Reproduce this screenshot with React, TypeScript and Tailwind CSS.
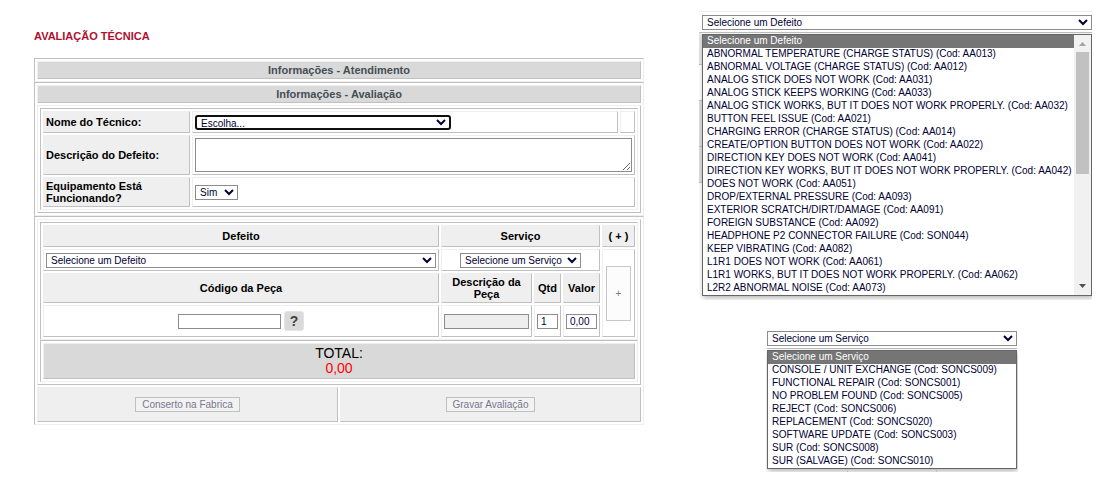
import type { ReactNode } from "react";

const defects = [
  "ABNORMAL TEMPERATURE (CHARGE STATUS) (Cod: AA013)",
  "ABNORMAL VOLTAGE (CHARGE STATUS) (Cod: AA012)",
  "ANALOG STICK DOES NOT WORK (Cod: AA031)",
  "ANALOG STICK KEEPS WORKING (Cod: AA033)",
  "ANALOG STICK WORKS, BUT IT DOES NOT WORK PROPERLY. (Cod: AA032)",
  "BUTTON FEEL ISSUE (Cod: AA021)",
  "CHARGING ERROR (CHARGE STATUS) (Cod: AA014)",
  "CREATE/OPTION BUTTON DOES NOT WORK (Cod: AA022)",
  "DIRECTION KEY DOES NOT WORK (Cod: AA041)",
  "DIRECTION KEY WORKS, BUT IT DOES NOT WORK PROPERLY. (Cod: AA042)",
  "DOES NOT WORK (Cod: AA051)",
  "DROP/EXTERNAL PRESSURE (Cod: AA093)",
  "EXTERIOR SCRATCH/DIRT/DAMAGE (Cod: AA091)",
  "FOREIGN SUBSTANCE (Cod: AA092)",
  "HEADPHONE P2 CONNECTOR FAILURE (Cod: SON044)",
  "KEEP VIBRATING (Cod: AA082)",
  "L1R1 DOES NOT WORK (Cod: AA061)",
  "L1R1 WORKS, BUT IT DOES NOT WORK PROPERLY. (Cod: AA062)",
  "L2R2 ABNORMAL NOISE (Cod: AA073)",
];

const services = [
  "CONSOLE / UNIT EXCHANGE (Cod: SONCS009)",
  "FUNCTIONAL REPAIR (Cod: SONCS001)",
  "NO PROBLEM FOUND (Cod: SONCS005)",
  "REJECT (Cod: SONCS006)",
  "REPLACEMENT (Cod: SONCS020)",
  "SOFTWARE UPDATE (Cod: SONCS003)",
  "SUR (Cod: SONCS008)",
  "SUR (SALVAGE) (Cod: SONCS010)",
];

const panel =
  "border border-t-[#c0c0c0] border-l-[#c0c0c0] border-r-[#eeeeee] border-b-[#eeeeee] p-[2px]";
const cell =
  "border border-t-[#eeeeee] border-l-[#eeeeee] border-r-[#c0c0c0] border-b-[#c0c0c0]";
const heading = `${cell} flex h-[18px] items-center justify-center bg-[#d9d9d9] text-[11px] leading-[12px] font-bold text-[#444f55]`;
const label = `${cell} flex items-center bg-[#efefef] px-[2px] text-[11px] leading-[12px] font-bold`;
const th = `${cell} bg-[#efefef] p-0 text-center align-middle text-[11px] leading-[12px] font-bold`;
const td = `${cell} p-0 text-center align-middle`;
const field =
  "h-[15px] border border-[#8c8c8c] bg-white text-[10px] leading-[13px] text-[#000033] outline-none";
const action =
  "h-[15px] border border-[#c0c0c0] bg-[#f2f2f2] text-[10px] leading-[13px] text-[#77778f]";

function Picker({
  name,
  first,
  items = [],
  className,
}: {
  name: string;
  first: string;
  items?: string[];
  className: string;
}) {
  return (
    <select aria-label={name} className={`${field} block rounded-none p-0 ${className}`}>
      <option>{first}</option>
      {items.map((item) => (
        <option key={item}>{item}</option>
      ))}
    </select>
  );
}

function OptionList({ name, first, items, children }: { name: string; first: string; items: string[]; children?: ReactNode }) {
  return (
    <div className="flex border border-[#666666] bg-white shadow-[1px_2px_5px_rgba(0,0,0,0.3)]">
      <ul role="listbox" aria-label={name} className="min-w-0 flex-1 text-[10px] leading-[12px] whitespace-nowrap text-[#000033]">
        <li role="option" aria-selected="true" className="bg-[#757575] px-1 pb-px text-white">
          {first}
        </li>
        {items.map((item) => (
          <li key={item} role="option" aria-selected="false" className="px-1 pb-px">
            {item}
          </li>
        ))}
      </ul>
      {children}
    </div>
  );
}

export default function App() {
  return (
    <div className="flex items-start gap-[55px] bg-white pr-[25px] pl-[34px] font-['Liberation_Sans',Arial,sans-serif] text-black">
      <main className="min-w-0 flex-[610] pt-[30px]">
        <h1 className="mb-4 text-[11px] leading-[12px] font-bold text-[#b01030]">AVALIAÇÃO TÉCNICA</h1>

        <section className={panel}>
          <h2 className={heading}>Informações - Atendimento</h2>
        </section>

        <section className={`${panel} flex flex-col gap-[2px]`}>
          <h2 className={heading}>Informações - Avaliação</h2>
          <div className={`${cell} p-[2px]`}>
            <div className={`${panel} flex flex-col gap-[2px]`}>
              <div className="flex h-[22px] gap-[2px]">
                <label htmlFor="tecnico" className={`${label} w-[147px]`}>
                  Nome do Técnico:
                </label>
                <div className={`${cell} flex flex-1 items-center px-[2px]`}>
                  <select
                    id="tecnico"
                    className="h-[15px] w-[256px] rounded-[3px] border-2 border-[#101010] bg-white p-0 text-[10px] leading-[11px] text-[#000033] outline-none"
                  >
                    <option>Escolha...</option>
                  </select>
                </div>
                <div className={`${cell} w-[15px]`} />
              </div>
              <div className="flex h-[40px] gap-[2px]">
                <label htmlFor="descricao" className={`${label} w-[147px]`}>
                  Descrição do Defeito:
                </label>
                <div className={`${cell} flex flex-1 p-[2px]`}>
                  <textarea id="descricao" className="h-[34px] w-full border border-[#8c8c8c] text-[10px] outline-none" />
                </div>
              </div>
              <div className="flex h-[30px] gap-[2px]">
                <label htmlFor="funcionando" className={`${label} w-[147px]`}>
                  Equipamento Está Funcionando?
                </label>
                <div className={`${cell} flex flex-1 items-center px-[2px]`}>
                  <select id="funcionando" className={`${field} w-[43px] rounded-none p-0`}>
                    <option>Sim</option>
                    <option>Não</option>
                  </select>
                </div>
              </div>
            </div>
          </div>
        </section>

        <section className={`${panel} flex flex-col gap-[2px]`}>
          <div className={`${cell} p-[2px]`}>
            <div className="border border-t-[#c0c0c0] border-r-[#eeeeee] border-b-[#eeeeee] border-l-[#c0c0c0]">
              <table className="w-full table-fixed border-separate border-spacing-[2px]">
                <colgroup>
                  <col />
                  <col className="w-[91px]" />
                  <col className="w-[27px]" />
                  <col className="w-[37px]" />
                  <col className="w-[33px]" />
                </colgroup>
                <tbody>
                  <tr className="h-[22px]">
                    <th className={th}>Defeito</th>
                    <th className={th} colSpan={3}>
                      Serviço
                    </th>
                    <th className={th}>( + )</th>
                  </tr>
                  <tr className="h-[22px]">
                    <td className={`${td} px-[2px]`}>
                      <Picker name="Defeito" first="Selecione um Defeito" items={defects} className="w-full" />
                    </td>
                    <td className={td} colSpan={3}>
                      <Picker name="Serviço" first="Selecione um Serviço" items={services} className="mx-auto w-[121px]" />
                    </td>
                    <td className={td} rowSpan={3}>
                      <button type="button" disabled className="h-[55px] w-[25px] border border-[#c8c8c8] bg-[#fcfcfc] text-[10px] text-[#77778f]">
                        +
                      </button>
                    </td>
                  </tr>
                  <tr className="h-[30px]">
                    <th className={th}>Código da Peça</th>
                    <th className={th}>Descrição da Peça</th>
                    <th className={th}>Qtd</th>
                    <th className={th}>Valor</th>
                  </tr>
                  <tr className="h-[32px]">
                    <td className={td}>
                      <div className="flex items-center justify-center gap-[3px]">
                        <input aria-label="Código da Peça" className={`${field} w-[103px] px-[3px]`} />
                        <button
                          type="button"
                          aria-label="Pesquisar peça"
                          className="flex h-[20px] w-[20px] items-center justify-center rounded-[3px] border border-[#e4e4e4] bg-[#dadada]"
                        >
                          <span className="text-[14px] leading-[16px] font-black text-[#404040]">?</span>
                        </button>
                      </div>
                    </td>
                    <td className={td}>
                      <input aria-label="Descrição da Peça" readOnly className="mx-auto block h-[15px] w-[85px] border border-[#8c8c8c] bg-[#eeeeee] text-[10px] outline-none" />
                    </td>
                    <td className={td}>
                      <input aria-label="Qtd" defaultValue="1" className={`${field} mx-auto block w-[21px] px-[3px]`} />
                    </td>
                    <td className={td}>
                      <input aria-label="Valor" defaultValue="0,00" className={`${field} mx-auto block w-[31px] px-[3px]`} />
                    </td>
                  </tr>
                </tbody>
              </table>
            </div>
            <div className={panel}>
              <div className={`${cell} flex h-[36px] flex-col items-center justify-center bg-[#d9d9d9] text-[14px] leading-[15px]`}>
                <span>TOTAL:</span>
                <output className="text-[#ff0000]">0,00</output>
              </div>
            </div>
          </div>
          <div className="flex gap-[2px]">
            <div className={`${cell} flex h-[35px] flex-1 items-center justify-center bg-[#efefef]`}>
              <button type="button" disabled className={`${action} w-[105px]`}>
                Conserto na Fabrica
              </button>
            </div>
            <div className={`${cell} flex h-[35px] flex-1 items-center justify-center bg-[#efefef]`}>
              <button type="button" disabled className={`${action} w-[89px]`}>
                Gravar Avaliação
              </button>
            </div>
          </div>
        </section>
      </main>

      <aside className="flex min-w-0 flex-[393] flex-col gap-[31px] pt-[11px]">
        <div className="flex overflow-hidden border-t border-[#eeeeee]">
          <div className="flex w-[3px] flex-col pt-[20px]">
            <div className="h-[33px] border-y border-[#c0c0c0] bg-[#e6e6e6]" />
            <div className="h-[36px] border-b border-[#c0c0c0]" />
            <div className="h-[46px] border-b border-[#c0c0c0] bg-[#dedede]" />
            <div className="h-[36px] border-b border-[#c0c0c0] bg-[#dedede]" />
          </div>
          <div className="min-w-0 flex-1 pt-[3px] pb-[4px]">
            <Picker name="Defeito disponível" first="Selecione um Defeito" items={defects} className="w-full" />
            <div className="mt-[2px] mb-px border-t border-[#c0c0c0]" />
            <OptionList name="Defeitos" first="Selecione um Defeito" items={defects}>
              <div className="flex w-[17px] flex-col items-center bg-[#f1f1f1]">
                <svg viewBox="0 0 17 17" className="h-[17px] w-[17px]" aria-hidden="true">
                  <path d="M5 11 8.500 7 12 11Z" fill="#a3a3a3" />
                </svg>
                <div className="h-[122px] w-[13px] bg-[#c1c1c1]" />
                <svg viewBox="0 0 17 17" className="mt-auto h-[17px] w-[17px]" aria-hidden="true">
                  <path d="M5 6 8.500 10 12 6Z" fill="#505050" />
                </svg>
              </div>
            </OptionList>
          </div>
        </div>

        <div className="mr-[74px] ml-[67px] overflow-hidden px-px">
          <Picker name="Serviço disponível" first="Selecione um Serviço" items={services} className="w-full" />
          <div className="mt-[2px] mb-px border-t border-[#c0c0c0]" />
          <OptionList name="Serviços" first="Selecione um Serviço" items={services} />
          <div className="flex h-[3px] justify-center">
            <div className="w-[90px] border-x border-[#c0c0c0]" />
          </div>
        </div>
      </aside>
    </div>
  );
}
